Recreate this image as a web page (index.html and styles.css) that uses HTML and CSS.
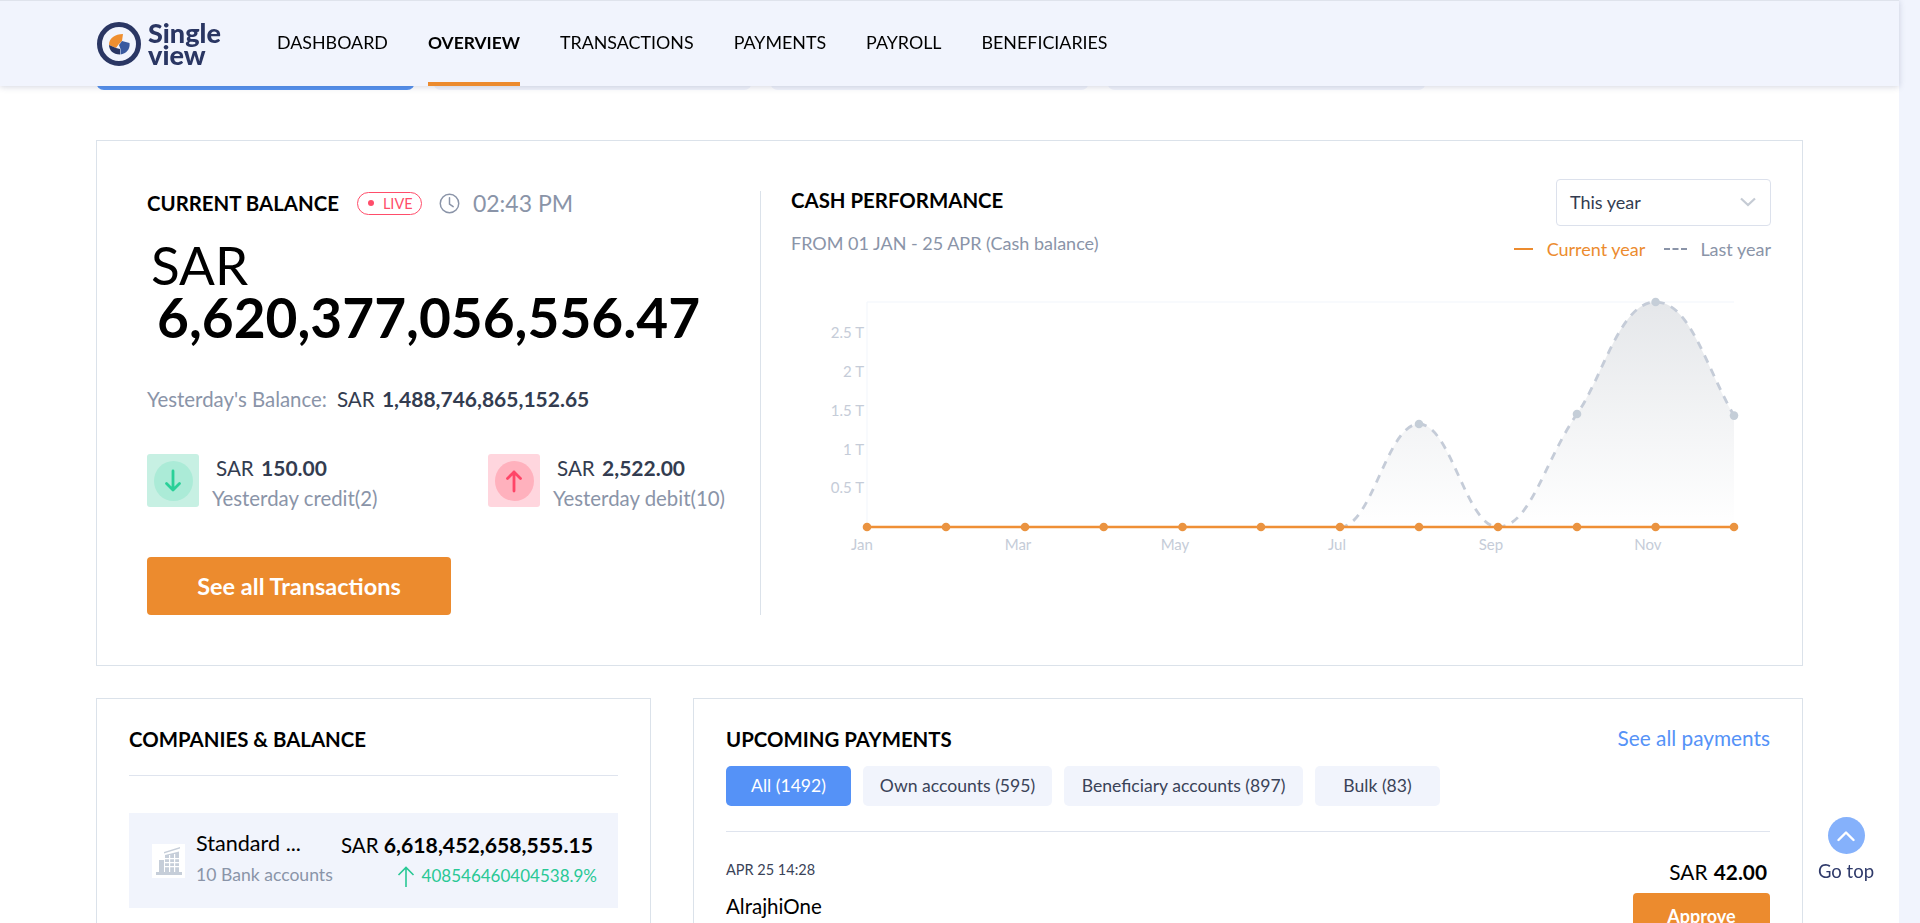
FILE: index.html
```html
<!DOCTYPE html>
<html lang="en">
<head>
    <meta charset="UTF-8">
    <meta name="viewport" content="width=device-width, initial-scale=1.0">
    <title>Single view - Overview</title>
    <link rel="stylesheet" href="styles.css">
</head>
<body>
    <header class="topbar">
        <a class="logo" href="#">
            <svg class="logo-mark" width="46" height="46" viewBox="0 0 46 46">
                <circle cx="23" cy="23" r="19.5" fill="none" stroke="#2a3663" stroke-width="5"/>
                <path d="M13 24 C13 17 19 13 27 13 L26 20 L22.5 23.5 L20 27 Z" fill="#ef8f30"/>
                <path d="M13 24 L20 27 L24 28 V33.5 C17 33.5 13 29 13 24 Z" fill="#2a3663"/>
                <path d="M26 20 L33.5 22 C34.5 28 30 33 24.5 33.5 V28 L23 24 Z" fill="#3a5a9f"/>
            </svg>
            <span class="logo-text">Single<br>view</span>
        </a>
        <nav class="mainnav">
            <a href="#">DASHBOARD</a>
            <a href="#" class="active">OVERVIEW</a>
            <a href="#">TRANSACTIONS</a>
            <a href="#">PAYMENTS</a>
            <a href="#">PAYROLL</a>
            <a href="#">BENEFICIARIES</a>
        </nav>
    </header>

    <main class="page">
        <div class="tabs">
            <div class="tab tab-active"></div>
            <div class="tab"></div>
            <div class="tab"></div>
            <div class="tab"></div>
        </div>

        <section class="card balance-card">
            <div class="balance-left">
                <div class="balance-head">
                    <h2 class="title">CURRENT BALANCE</h2>
                    <span class="live"><i class="live-dot"></i>LIVE</span>
                    <svg class="clock" width="21" height="21" viewBox="0 0 20 20" fill="none" stroke="#8a94a8" stroke-width="1.4">
                        <circle cx="10" cy="10" r="8.8"/>
                        <path d="M10 4.5 V10.5 L13.5 13" stroke-linecap="round"/>
                    </svg>
                    <span class="time">02:43 PM</span>
                </div>
                <div class="amount-cur">SAR</div>
                <div class="amount-num">6,620,377,056,556.47</div>
                <div class="yesterday">
                    <span class="muted">Yesterday's Balance:</span>
                    <span class="dark">SAR <b>1,488,746,865,152.65</b></span>
                </div>
                <div class="stats">
                    <div class="stat">
                        <div class="stat-icon green">
                            <span class="stat-circle">
                                <svg width="20" height="24" viewBox="0 0 20 24" fill="none" stroke="#29d098" stroke-width="2.8" stroke-linecap="round" stroke-linejoin="round"><path d="M10 2 V21 M3.5 14.5 L10 21 L16.5 14.5"/></svg>
                            </span>
                        </div>
                        <div class="stat-text">
                            <div class="stat-val dark">SAR <b>150.00</b></div>
                            <div class="muted">Yesterday credit(2)</div>
                        </div>
                    </div>
                    <div class="stat">
                        <div class="stat-icon red">
                            <span class="stat-circle">
                                <svg width="20" height="24" viewBox="0 0 20 24" fill="none" stroke="#ff4567" stroke-width="2.8" stroke-linecap="round" stroke-linejoin="round"><path d="M10 22 V3 M3.5 9.5 L10 3 L16.5 9.5"/></svg>
                            </span>
                        </div>
                        <div class="stat-text">
                            <div class="stat-val dark">SAR <b>2,522.00</b></div>
                            <div class="muted">Yesterday debit(10)</div>
                        </div>
                    </div>
                </div>
                <a href="#" class="btn btn-big">See all Transactions</a>
            </div>

            <div class="balance-right">
                <div class="chart-head">
                    <div class="chart-titles">
                        <h2 class="title">CASH PERFORMANCE</h2>
                        <p class="chart-sub">FROM 01 JAN - 25 APR (Cash balance)</p>
                    </div>
                    <div class="chart-tools">
                        <div class="select">
                            <span>This year</span>
                            <svg width="16" height="10" viewBox="0 0 16 10" fill="none" stroke="#c5cbd4" stroke-width="2.2"><path d="M1 1.5 L8 8 L15 1.5"/></svg>
                        </div>
                        <div class="legend">
                            <i class="legend-solid"></i><span class="legend-current">Current year</span>
                            <i class="legend-dash"></i><span class="legend-last">Last year</span>
                        </div>
                    </div>
                </div>
                <!-- viewBox uses page coordinates, easier to read off the design -->
                <svg class="chart" width="979" height="290" viewBox="792 280 979 290">
                    <defs>
                        <linearGradient id="areaFill" x1="0" y1="0" x2="0" y2="1">
                            <stop offset="0" stop-color="#e5e7ea"/>
                            <stop offset="1" stop-color="#ffffff"/>
                        </linearGradient>
                    </defs>
                    <path d="M867 302 H1734 M867 302 V527" fill="none" stroke="#f1f5fb" stroke-width="1"/>
                    <g class="tick-y">
                        <text x="864" y="338">2.5 T</text>
                        <text x="864" y="377">2 T</text>
                        <text x="864" y="416">1.5 T</text>
                        <text x="864" y="455">1 T</text>
                        <text x="864" y="493">0.5 T</text>
                    </g>
                    <g class="tick-x">
                        <text x="862" y="550">Jan</text>
                        <text x="1018" y="550">Mar</text>
                        <text x="1175" y="550">May</text>
                        <text x="1337" y="550">Jul</text>
                        <text x="1491" y="550">Sep</text>
                        <text x="1648" y="550">Nov</text>
                    </g>
                    <path fill="url(#areaFill)" d="M1340 527 C1372 527 1387 424 1419 424 C1451 424 1466 527 1498 527 C1530 527 1545 460 1577 414 C1603 377 1620 302 1655.6 302 C1690 302 1705 365 1734 415.6 V527 Z"/>
                    <path fill="none" stroke="#c5ccd8" stroke-width="2.8" stroke-dasharray="8 7" d="M1340 527 C1372 527 1387 424 1419 424 C1451 424 1466 527 1498 527 C1530 527 1545 460 1577 414 C1603 377 1620 302 1655.6 302 C1690 302 1705 365 1734 415.6"/>
                    <g fill="#c5ced8">
                        <circle cx="1419" cy="424" r="4.3"/>
                        <circle cx="1577" cy="414" r="4.3"/>
                        <circle cx="1655.6" cy="302" r="4.3"/>
                        <circle cx="1734" cy="415.6" r="4.3"/>
                    </g>
                    <path d="M867 527 H1734" stroke="#ef8f35" stroke-width="2.6"/>
                    <g fill="#ea9340">
                        <circle cx="867" cy="527" r="4.3"/>
                        <circle cx="946" cy="527" r="4.3"/>
                        <circle cx="1025" cy="527" r="4.3"/>
                        <circle cx="1103.7" cy="527" r="4.3"/>
                        <circle cx="1182.5" cy="527" r="4.3"/>
                        <circle cx="1261" cy="527" r="4.3"/>
                        <circle cx="1340" cy="527" r="4.3"/>
                        <circle cx="1419" cy="527" r="4.3"/>
                        <circle cx="1498" cy="527" r="4.3"/>
                        <circle cx="1577" cy="527" r="4.3"/>
                        <circle cx="1655.6" cy="527" r="4.3"/>
                        <circle cx="1734" cy="527" r="4.3"/>
                    </g>
                </svg>
            </div>
        </section>

        <div class="columns">
            <section class="card companies">
                <h2 class="title">COMPANIES &amp; BALANCE</h2>
                <hr class="rule">
                <div class="company">
                    <span class="company-icon">
                        <svg width="26" height="28" viewBox="0 0 26 28" fill="#c6ced9">
                            <path d="M8 5 L24 0 V1.6 L8 6.6 Z M9 8 L23 4.5 V26 H9 Z M3 13 H8 V26 H3 Z M0 25 H26 V28 H0 Z"/>
                            <path d="M9 11 H23 V12.2 H9 Z M9 15 H23 V16.2 H9 Z M9 19 H23 V20.2 H9 Z M13 8 H14.2 V25 H13 Z M18 7 H19.2 V25 H18 Z" fill="#fff"/>
                        </svg>
                    </span>
                    <div class="company-name">
                        <div class="name">Standard ...</div>
                        <div class="muted small">10 Bank accounts</div>
                    </div>
                    <div class="company-bal">
                        <div class="black">SAR <b>6,618,452,658,555.15</b></div>
                        <div class="pct">
                            <svg width="18" height="21" viewBox="0 0 18 21" fill="none" stroke="#29c895" stroke-width="1.6"><path d="M9 21 V1.5 M1.5 9 L9 1.5 L16.5 9"/></svg>
                            408546460404538.9%
                        </div>
                    </div>
                </div>
            </section>

            <section class="card payments">
                <div class="pay-head">
                    <h2 class="title">UPCOMING PAYMENTS</h2>
                    <a href="#" class="see-all">See all payments</a>
                </div>
                <div class="chips">
                    <a href="#" class="chip chip-on">All (1492)</a>
                    <a href="#" class="chip">Own accounts (595)</a>
                    <a href="#" class="chip">Beneficiary accounts (897)</a>
                    <a href="#" class="chip">Bulk (83)</a>
                </div>
                <hr class="rule rule-pay">
                <div class="payment">
                    <div>
                        <div class="pay-date">APR 25 14:28</div>
                        <div class="pay-name">AlrajhiOne</div>
                    </div>
                    <div class="pay-side">
                        <div class="pay-amount">SAR <b>42.00</b></div>
                        <a href="#" class="btn btn-small">Approve</a>
                    </div>
                </div>
            </section>
        </div>
    </main>

    <a href="#" class="gotop">
        <span class="gotop-circle">
            <svg width="18" height="12" viewBox="0 0 18 12" fill="none" stroke="#fff" stroke-width="2.4" stroke-linecap="round" stroke-linejoin="round"><path d="M1.5 10 L9 2.5 L16.5 10"/></svg>
        </span>
        Go top
    </a>
</body>
</html>
```

FILE: styles.css
```css
html, body {
    margin: 0;
    padding: 0;
    height: 923px;
    overflow: hidden;
}

body {
    font-family: Lato, "Open Sans", sans-serif;
    background-color: #f1f4fd;
    color: #000;
}

a {
    text-decoration: none;
    color: inherit;
}

h2, p {
    margin: 0;
}

/* top bar */
.topbar {
    position: fixed;
    top: 0;
    left: 0;
    z-index: 10;
    width: 1899px;
    height: 86px;
    box-sizing: border-box;
    padding-left: 96px;
    display: flex;
    align-items: center;
    background-color: #f1f4fd;
    border-top: 1px solid #dfe3ec;
    box-shadow: 0 1px 6px rgba(60, 70, 110, 0.22);
}

.logo {
    display: flex;
    align-items: center;
    width: 181px;
    gap: 6px;
}

.logo-text {
    font-size: 27px;
    line-height: 22px;
    font-weight: 900;
    color: #2a3663;
}

.mainnav {
    display: flex;
    gap: 40px;
    height: 100%;
}

.mainnav a {
    display: flex;
    align-items: center;
    font-size: 17.85px;
    box-sizing: border-box;
    border-bottom: 4px solid transparent;
    padding-top: 1px;
}

.mainnav a.active {
    font-size: 17.4px;
    font-weight: 700;
    border-bottom-color: #ec8b2e;
}

/* page */
.page {
    width: 1899px;
    height: 923px;
    box-sizing: border-box;
    padding: 0 96px;
    background-color: #fff;
    overflow: hidden;
}

.tabs {
    display: flex;
    gap: 18px;
    height: 90px;
}

.tab {
    width: 319px;
    background-color: #f1f4fc;
    border-radius: 0 0 8px 8px;
}

.tab-active {
    background-color: #5592f0;
}

.card {
    border: 1px solid #dbe2ea;
    background-color: #fff;
}

.title {
    font-size: 20.4px;
    line-height: 24px;
    font-weight: 700;
}

.muted {
    color: #8a94a8;
    font-size: 20.4px;
    line-height: 24px;
}

.dark {
    color: #333c50;
    font-size: 20.6px;
    line-height: 24px;
}

.dark b {
    margin-left: 2px;
    font-size: 21px;
}

.small {
    font-size: 17.6px;
}

/* balance card */
.balance-card {
    margin-top: 50px;
    height: 526px;
    box-sizing: border-box;
    padding: 50px 0;
    display: flex;
}

.balance-left {
    width: 663px;
    box-sizing: border-box;
    padding-left: 50px;
}

.balance-head {
    display: flex;
    align-items: center;
    height: 24px;
}

.live {
    display: flex;
    align-items: center;
    margin-left: 18px;
    width: 65px;
    height: 23px;
    box-sizing: border-box;
    padding-left: 10px;
    border: 1px solid #ff4d6a;
    border-radius: 12px;
    color: #ff4d6a;
    font-size: 14.5px;
}

.live-dot {
    width: 6px;
    height: 6px;
    border-radius: 50%;
    background-color: #ff4d6a;
    margin-right: 9px;
}

.clock {
    margin-left: 17px;
}

.time {
    margin-left: 13px;
    color: #8a94a8;
    font-size: 23px;
}

.amount-cur {
    margin-top: 23px;
    padding-left: 4px;
    font-size: 53px;
    line-height: 53px;
}

.amount-num {
    padding-left: 10px;
    font-size: 55px;
    line-height: 53px;
    font-weight: 700;
}

.yesterday {
    display: flex;
    gap: 10px;
    margin-top: 43px;
}

.stats {
    display: flex;
    margin-top: 43px;
}

.stat {
    flex: none;
    display: flex;
    width: 341px;
    height: 53px;
    gap: 13px;
}

.stat-icon {
    width: 52px;
    height: 53px;
    border-radius: 3px;
    display: flex;
    align-items: center;
    justify-content: center;
}

.stat-icon.green {
    background-color: #c7f0e3;
}

.stat-icon.red {
    background-color: #ffd6de;
}

.stat-circle {
    width: 39px;
    height: 40px;
    border-radius: 50%;
    display: flex;
    align-items: center;
    justify-content: center;
}

.green .stat-circle {
    background-color: #abebd7;
}

.red .stat-circle {
    background-color: #ffb1bd;
}

.stat-text {
    padding-top: 2px;
}

.stat-val {
    padding-left: 4px;
    margin-bottom: 6px;
}

.btn {
    display: flex;
    align-items: center;
    justify-content: center;
    background-color: #ec8b2e;
    color: #fff;
    border-radius: 4px;
    font-weight: 700;
}

.btn-big {
    margin-top: 50px;
    width: 304px;
    height: 58px;
    font-size: 23.5px;
}

/* chart */
.balance-right {
    flex: 1;
    box-sizing: border-box;
    padding: 0 31px 0 30px;
    border-left: 1px solid #dbe2ea;
}

.chart-head {
    display: flex;
    justify-content: space-between;
    margin-top: -12px;
}

.chart-titles {
    padding-top: 9px;
}

.chart-sub {
    margin-top: 19px;
    color: #8a94a8;
    font-size: 18px;
    line-height: 24px;
}

.chart-tools {
    width: 300px;
}

.select {
    width: 215px;
    height: 47px;
    margin-left: auto;
    box-sizing: border-box;
    padding: 0 14px 1px 13px;
    display: flex;
    align-items: center;
    justify-content: space-between;
    border: 1px solid #dce1ec;
    border-radius: 4px;
    color: #333c50;
    font-size: 18px;
}

.legend {
    display: flex;
    justify-content: flex-end;
    align-items: center;
    height: 24px;
    margin-top: 11px;
    font-size: 18px;
}

.legend-solid {
    width: 19px;
    height: 2px;
    background-color: #ec8b2e;
    margin-right: 14px;
}

.legend-current {
    color: #ec8b2e;
}

.legend-dash {
    width: 23px;
    height: 0;
    border-top: 2px dashed #8a94a8;
    margin: 0 13px 0 19px;
}

.legend-last {
    color: #8a94a8;
}

.chart {
    display: block;
    margin-top: 19px;
    margin-left: 1px;
}

.chart text {
    fill: #c5ccd8;
    font-size: 15px;
}

.tick-y text {
    text-anchor: end;
}

.tick-x text {
    text-anchor: middle;
}

/* bottom row */
.columns {
    display: flex;
    gap: 42px;
    margin-top: 32px;
    height: 300px;
}

.companies {
    width: 555px;
    box-sizing: border-box;
    padding: 28px 32px;
}

.rule {
    border: none;
    border-top: 1px solid #dfe4ee;
    margin: 24px 0 37px;
}

.company {
    height: 95px;
    box-sizing: border-box;
    padding: 0 21px 0 23px;
    display: flex;
    align-items: center;
    background-color: #f1f4fc;
}

.company-icon {
    width: 33px;
    height: 34px;
    background-color: #fff;
    display: flex;
    align-items: center;
    justify-content: center;
    margin-right: 11px;
}

.company-name {
    flex: 1;
    margin-top: -4px;
}

.name {
    font-size: 21.6px;
    line-height: 24px;
    margin-bottom: 8px;
}

.company-bal {
    text-align: right;
    font-size: 20.5px;
    line-height: 24px;
}

.black {
    padding-right: 4px;
}

.black b {
    font-size: 21.2px;
}

.pct {
    display: flex;
    align-items: center;
    justify-content: flex-end;
    gap: 7px;
    margin-top: 7px;
    color: #29c895;
    font-size: 17px;
}

.payments {
    flex: 1;
    box-sizing: border-box;
    padding: 28px 32px;
}

.pay-head {
    display: flex;
    justify-content: space-between;
}

.see-all {
    color: #5592f7;
    font-size: 20.8px;
    line-height: 22px;
}

.chips {
    display: grid;
    grid-template-columns: 125px 189px 239px 125px;
    gap: 12px;
    margin-top: 15px;
}

.chip {
    height: 40px;
    padding-bottom: 2px;
    box-sizing: border-box;
    display: flex;
    align-items: center;
    justify-content: center;
    background-color: #f1f4fc;
    border-radius: 5px;
    color: #3a4358;
    font-size: 17.6px;
}

.chip-on {
    background-color: #5592f7;
    color: #fff;
}

.rule-pay {
    margin: 25px 0 0;
}

.payment {
    display: flex;
    justify-content: space-between;
}

.pay-date {
    margin-top: 28px;
    color: #3a4358;
    font-size: 14.5px;
    line-height: 20px;
}

.pay-name {
    margin-top: 14px;
    font-size: 20.5px;
    line-height: 24px;
}

.pay-side {
    margin-top: 28px;
    text-align: right;
}

.pay-amount {
    padding-right: 3px;
    font-size: 20.8px;
    line-height: 24px;
}

.pay-amount b {
    margin-left: 1px;
}

.btn-small {
    width: 137px;
    height: 46px;
    margin-top: 9px;
    font-size: 18px;
}

/* floating link, stays over the page */
.gotop {
    position: fixed;
    left: 1806px;
    top: 817px;
    width: 80px;
    display: flex;
    flex-direction: column;
    align-items: center;
    gap: 5px;
    color: #2f3a6a;
    font-size: 18.5px;
    line-height: 24px;
}

.gotop-circle {
    width: 37px;
    height: 37px;
    border-radius: 50%;
    background-color: #85b1fb;
    display: flex;
    align-items: center;
    justify-content: center;
}
```
